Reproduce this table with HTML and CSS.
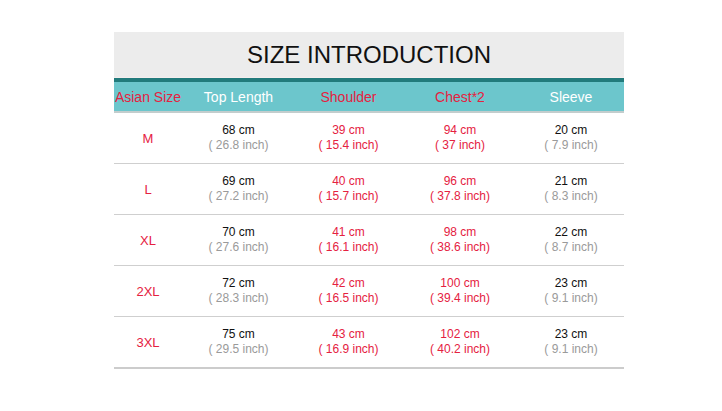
FILE: index.html
```html
<!DOCTYPE html>
<html>
<head>
<meta charset="utf-8">
<link rel="stylesheet" href="styles.css">
</head>
<body>
<div class="chart">
  <div class="title">SIZE INTRODUCTION</div>
  <table class="sizes">
    <colgroup>
      <col class="c1"><col class="c2"><col class="c3"><col class="c4"><col class="c5">
    </colgroup>
    <thead>
      <tr>
        <th class="red">Asian Size</th>
        <th>Top Length</th>
        <th class="red">Shoulder</th>
        <th class="red">Chest*2</th>
        <th>Sleeve</th>
      </tr>
    </thead>
    <tbody>
      <tr>
        <td class="size">M</td>
        <td><div>68 cm</div><div class="inch">( 26.8 inch)</div></td>
        <td class="red"><div>39 cm</div><div>( 15.4 inch)</div></td>
        <td class="red"><div>94 cm</div><div>( 37 inch)</div></td>
        <td><div>20 cm</div><div class="inch">( 7.9 inch)</div></td>
      </tr>
      <tr>
        <td class="size">L</td>
        <td><div>69 cm</div><div class="inch">( 27.2 inch)</div></td>
        <td class="red"><div>40 cm</div><div>( 15.7 inch)</div></td>
        <td class="red"><div>96 cm</div><div>( 37.8 inch)</div></td>
        <td><div>21 cm</div><div class="inch">( 8.3 inch)</div></td>
      </tr>
      <tr>
        <td class="size">XL</td>
        <td><div>70 cm</div><div class="inch">( 27.6 inch)</div></td>
        <td class="red"><div>41 cm</div><div>( 16.1 inch)</div></td>
        <td class="red"><div>98 cm</div><div>( 38.6 inch)</div></td>
        <td><div>22 cm</div><div class="inch">( 8.7 inch)</div></td>
      </tr>
      <tr>
        <td class="size">2XL</td>
        <td><div>72 cm</div><div class="inch">( 28.3 inch)</div></td>
        <td class="red"><div>42 cm</div><div>( 16.5 inch)</div></td>
        <td class="red"><div>100 cm</div><div>( 39.4 inch)</div></td>
        <td><div>23 cm</div><div class="inch">( 9.1 inch)</div></td>
      </tr>
      <tr>
        <td class="size">3XL</td>
        <td><div>75 cm</div><div class="inch">( 29.5 inch)</div></td>
        <td class="red"><div>43 cm</div><div>( 16.9 inch)</div></td>
        <td class="red"><div>102 cm</div><div>( 40.2 inch)</div></td>
        <td><div>23 cm</div><div class="inch">( 9.1 inch)</div></td>
      </tr>
    </tbody>
  </table>
</div>
</body>
</html>
```
FILE: styles.css
```css
html, body {
  margin: 0;
  padding: 0;
  background: #ffffff;
}
body {
  font-family: "Liberation Sans", Arial, sans-serif;
  padding-top: 32px;
}
.chart {
  width: 510px;
  margin-left: 114px;
}
.title {
  height: 45px;
  line-height: 45px;
  background: #ececec;
  text-align: center;
  font-size: 24px;
  color: #111111;
  border-bottom: 1px solid #f4eeee;
}
.sizes {
  width: 510px;
  border-collapse: collapse;
  table-layout: fixed;
}
.c1 { width: 68px; }
.c2 { width: 113px; }
.c3 { width: 107px; }
.c4 { width: 116px; }
.c5 { width: 106px; }
.sizes thead th {
  background: #6cc6cc;
  border-top: 4px solid #227b7c;
  border-bottom: 2px solid #c3cdcd;
  height: 29px;
  padding: 0;
  font-weight: normal;
  font-size: 14px;
  color: #ffffff;
  text-align: center;
  white-space: nowrap;
}
.sizes thead th.red {
  color: #e5213f;
}
.sizes td {
  height: 50px;
  padding: 0;
  text-align: center;
  font-size: 12px;
  line-height: 15px;
  color: #111111;
  border-bottom: 1px solid #cfcfcf;
}
.sizes tbody tr:last-child td {
  border-bottom: 2px solid #cccccc;
}
.sizes td.red,
.sizes td.size {
  color: #e5213f;
}
.sizes td.size {
  font-size: 13px;
}
.inch {
  color: #9a9a9a;
}
```
